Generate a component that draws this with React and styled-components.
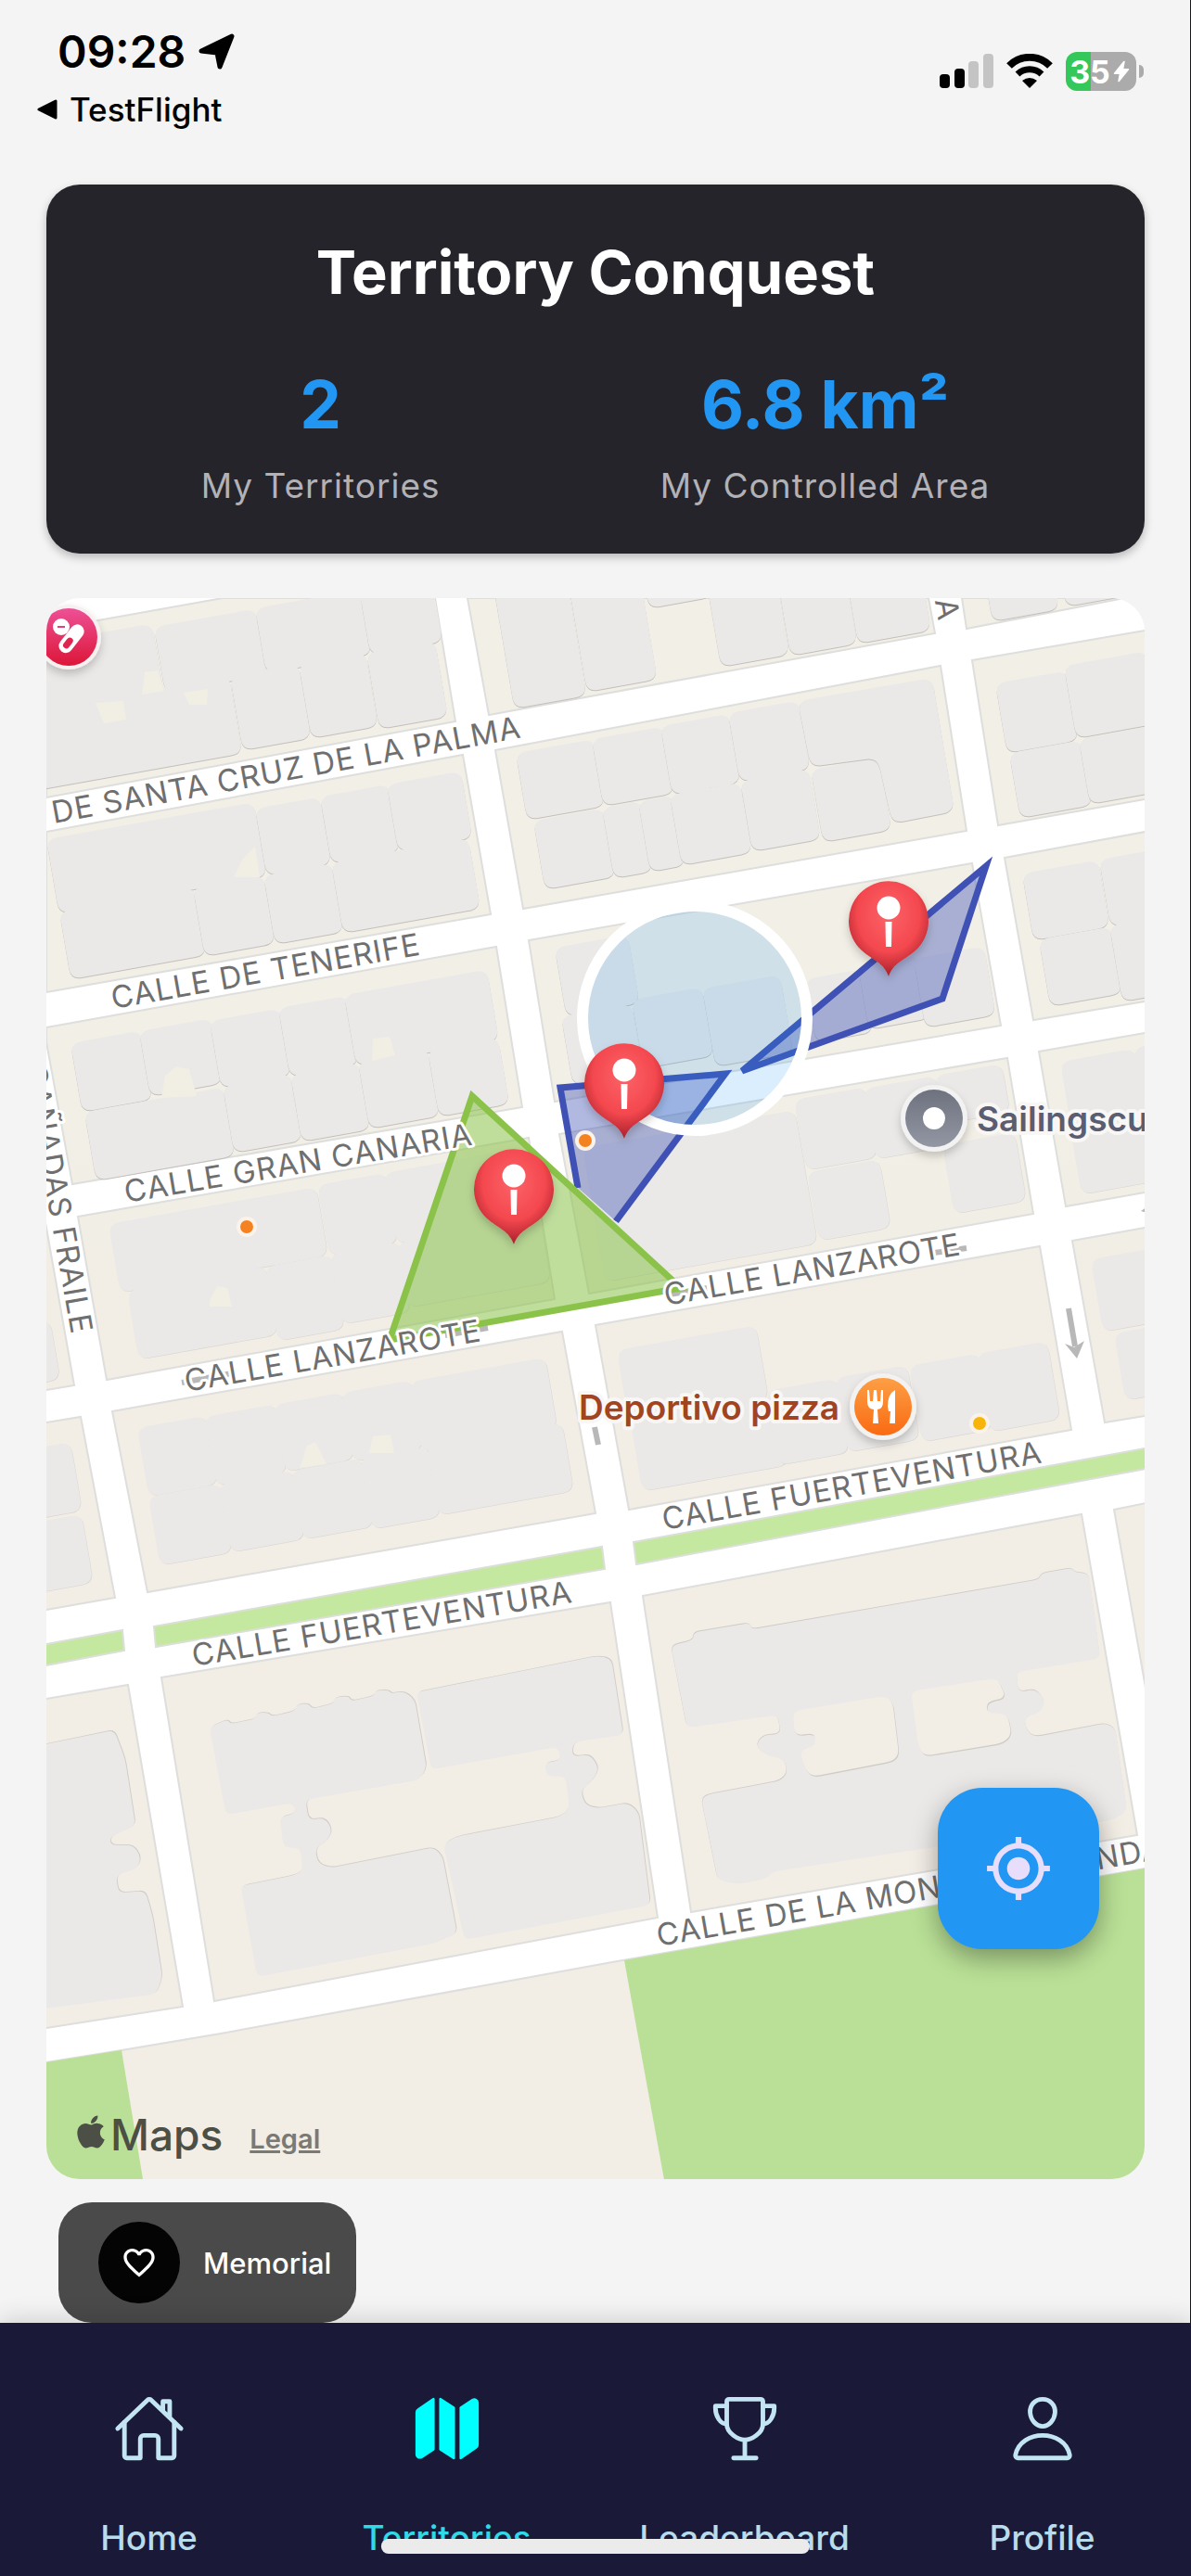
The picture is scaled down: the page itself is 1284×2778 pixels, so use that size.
import { FaApple } from "react-icons/fa";
import {
  IoFlash,
  IoHomeOutline,
  IoMap,
  IoPersonOutline,
  IoTrophyOutline,
} from "react-icons/io5";
import { MdFavoriteBorder, MdMyLocation } from "react-icons/md";
import styled, { createGlobalStyle } from "styled-components";

const GlobalStyle = createGlobalStyle`
  * {
    box-sizing: border-box;
  }

  body {
    margin: 0;
    background-color: #f4f4f4;
    font-family: Inter, "Liberation Sans", sans-serif;
    color: #000;
  }
`;

const Page = styled.div`
  display: flex;
  flex-direction: column;
  min-height: 100vh;
  border-right: 1px solid #15151c;
`;

/* status bar */

const StatusBar = styled.header`
  display: flex;
  justify-content: space-between;
  align-items: flex-start;
  padding: 28px 50px 61px 40px;
`;

const StatusLeft = styled.div`
  display: flex;
  flex-direction: column;
  gap: 14px;
`;

const Clock = styled.div`
  display: flex;
  align-items: center;
  gap: 14px;
  padding-left: 22px;
  font-size: 48px;
  line-height: 56px;
  font-weight: 600;
`;

const BackLink = styled.a`
  display: flex;
  align-items: center;
  gap: 13px;
  font-size: 35px;
  line-height: 40px;
  font-weight: 500;
  color: inherit;
  text-decoration: none;
`;

const StatusRight = styled.div`
  display: flex;
  align-items: center;
  gap: 14px;
  padding-top: 28px;
`;

const Battery = styled.div`
  position: relative;
  display: flex;
  align-items: center;
  justify-content: center;
  width: 76px;
  height: 42px;
  margin-right: 8px;
  border-radius: 12px;
  background: linear-gradient(90deg, #34c759 36%, #ababab 36%);
  color: white;
  font-size: 34px;
  font-weight: 700;

  &::after {
    content: "";
    position: absolute;
    right: -8px;
    width: 5px;
    height: 14px;
    border-radius: 0 5px 5px 0;
    background-color: #ababab;
  }
`;

/* summary card */

const Main = styled.main`
  display: flex;
  flex-direction: column;
  flex: 1;
  padding: 0 49px 0 50px;
`;

const SummaryCard = styled.section`
  padding: 48px;
  margin-bottom: 48px;
  border-radius: 36px;
  background-color: #25242b;
  box-shadow: 0 4px 10px rgba(0, 0, 0, 0.25);
`;

const Title = styled.h1`
  margin: 0 0 48px;
  color: white;
  font-size: 65px;
  line-height: 94px;
  font-weight: 700;
  text-align: center;
`;

const Stats = styled.div`
  display: flex;
  justify-content: space-around;
`;

const Stat = styled.div`
  display: flex;
  flex-direction: column;
  align-items: center;
  gap: 16px;
`;

const StatValue = styled.div`
  color: #2196f3;
  font-size: 71px;
  line-height: 94px;
  font-weight: 700;
`;

const StatLabel = styled.div`
  color: #b2b1b6;
  font-size: 37px;
  line-height: 50px;
  letter-spacing: 1px;
`;

/* map */

const MapFrame = styled.section`
  position: relative;
  overflow: hidden;
  border-radius: 36px;
  background-color: white;
`;

const MapDrawing = styled.svg`
  display: block;
  width: 100%;
`;

const StreetName = styled.text`
  fill: #6f6f6f;
  font-size: 33px;
  letter-spacing: 1px;
  stroke: white;
  stroke-width: 6px;
  stroke-linejoin: round;
  paint-order: stroke;
`;

const PlaceName = styled.text`
  font-size: 37px;
  font-weight: 600;
  stroke: #f8f7f5;
  stroke-width: 8px;
  stroke-linejoin: round;
  paint-order: stroke;
`;

const Attribution = styled.div`
  position: absolute;
  left: 28px;
  bottom: 18px;
  display: flex;
  align-items: flex-end;
  gap: 29px;
`;

const MapsBrand = styled.span`
  display: flex;
  align-items: center;
  gap: 1px;
  color: #4c4f45;
  font-size: 46px;
  line-height: 60px;
  font-weight: 500;

  svg {
    margin-bottom: 6px;
  }
`;

const LegalLink = styled.a`
  color: #7b7974;
  font-size: 29px;
  line-height: 50px;
  font-weight: 600;
  text-decoration-thickness: 3px;
`;

const LocateButton = styled.button`
  position: absolute;
  right: 49px;
  bottom: 248px;
  display: flex;
  align-items: center;
  justify-content: center;
  width: 174px;
  height: 174px;
  padding: 0;
  border: none;
  border-radius: 48px;
  background-color: #2196f3;
  color: #e8defc;
  box-shadow: 0 10px 28px rgba(0, 0, 0, 0.35);
`;

/* memorial button */

const MemorialButton = styled.button`
  display: flex;
  align-items: center;
  align-self: flex-start;
  gap: 25px;
  margin: 25px 0 0 13px;
  padding: 21px 27px 21px 43px;
  border: none;
  border-radius: 36px;
  background-color: #4a4a4a;
  color: white;
  font-family: inherit;
  font-size: 31px;
  font-weight: 500;
`;

const HeartBadge = styled.span`
  display: flex;
  align-items: center;
  justify-content: center;
  width: 88px;
  height: 88px;
  border-radius: 50%;
  background-color: #040404;
`;

/* tab bar */

const TabBar = styled.nav`
  position: relative;
  display: flex;
  padding: 75px 0 17px;
  margin-right: -1px;
  background-color: #1a1a38;
  box-shadow: 0 -4px 24px rgba(0, 0, 0, 0.14);
`;

const Tab = styled.a`
  display: flex;
  flex: 1;
  flex-direction: column;
  align-items: center;
  gap: 55px;
  color: ${(props) => (props.$active ? "#00ffff" : "#c3e4f2")};
  font-size: 37px;
  line-height: 48px;
  font-weight: 500;
  text-decoration: none;
`;

const TabLabel = styled.span`
  color: ${(props) => (props.$active ? "#2fd9e6" : "#b9dcec")};
`;

const HomeIndicator = styled.div`
  position: absolute;
  left: 50%;
  bottom: 24px;
  width: 36%;
  height: 16px;
  border-radius: 8px;
  background-color: #ebebeb;
  transform: translateX(-50%);
`;

const blocks = [
  "50,679 240,645 469,645 491,778 50,860",
  "504,645 1001,645 1008,683 527,771",
  "1037,645 1212,645 1042,678",
  "1048,712 1240,679 1240,861 1076,890",
  "534,809 1014,718 1042,896 564,980",
  "50,897 499,814 529,986 50,1070",
  "50,1108 535,1021 563,1194 78,1277 50,1124",
  "570,1014 1048,931 1079,1106 598,1188",
  "1083,925 1240,896 1240,1079 1114,1100",
  "84,1312 570,1227 598,1401 115,1488",
  "603,1223 1086,1141 1114,1309 635,1395",
  "1120,1134 1240,1113 1240,1285 1149,1301",
  "121,1522 606,1436 642,1632 159,1717",
  "642,1429 1121,1344 1155,1542 678,1628",
  "1156,1338 1240,1323 1240,1526 1191,1534",
  "44,1290 80,1494 44,1500",
  "44,1535 87,1528 124,1723 44,1737",
  "44,1833 138,1817 197,2164 44,2188",
  "174,1809 658,1728 709,2068 231,2158",
  "693,1721 1166,1633 1226,1979 745,2062",
  "1201,1628 1240,1620 1240,1848",
  "44,2225 131,2211 238,2193 660,2116 1240,2014 1240,2356 44,2356",
];

const medians = [
  "44,1774 132,1758 134,1780 44,1797",
  "166,1754 649,1668 652,1692 168,1776",
  "683,1663 1240,1561 1240,1583 686,1687",
];

const parks = [
  "44,2225 131,2211 155,2356 44,2356",
  "673,2114 1240,2014 1240,2356 717,2356",
];

// [x, y, width, depth] of each lot, skewed to the street grid
const northLots = [
  [20, 698, 140, 90],
  [166, 676, 106, 67],
  [275, 656, 110, 66],
  [388, 640, 74, 62],
  [25, 768, 218, 80],
  [248, 729, 70, 76],
  [322, 716, 68, 76],
  [395, 704, 70, 78],
  [530, 620, 74, 140],
  [612, 624, 72, 118],
  [690, 600, 65, 52],
  [757, 600, 70, 115],
  [832, 588, 68, 115],
  [905, 577, 75, 113],
  [1059, 606, 68, 60],
  [1140, 600, 60, 50],
  [1073, 737, 73, 71],
  [1147, 718, 85, 74],
  [1088, 812, 74, 66],
  [1163, 797, 80, 66],
  [556, 812, 80, 68],
  [638, 797, 73, 68],
  [712, 783, 70, 70],
  [785, 769, 72, 70],
  [575, 885, 72, 70],
  [649, 871, 38, 72],
  [688, 864, 34, 72],
  [722, 857, 72, 72],
  [798, 842, 70, 72],
  [874, 830, 70, 74],
  [50, 905, 220, 76],
  [275, 872, 66, 68],
  [345, 859, 70, 68],
  [417, 846, 76, 68],
  [64, 983, 142, 69],
  [208, 957, 72, 70],
  [284, 944, 70, 70],
  [357, 930, 144, 72],
  [76, 1125, 72, 70],
  [150, 1112, 74, 66],
  [226, 1101, 72, 68],
  [300, 1087, 70, 70],
  [371, 1073, 150, 72],
  [91, 1199, 146, 70],
  [240, 1171, 70, 68],
  [313, 1159, 70, 68],
  [386, 1145, 72, 68],
  [461, 1132, 72, 68],
  [598, 1022, 75, 70],
  [605, 1096, 72, 70],
  [681, 1078, 72, 70],
  [757, 1066, 80, 80],
  [868, 1056, 58, 64],
  [925, 1042, 62, 64],
  [985, 1034, 72, 70],
  [1102, 942, 78, 68],
  [1185, 927, 70, 68],
  [1120, 1013, 74, 68],
  [1196, 998, 60, 78],
];

const middleLots = [
  [628, 1238, 225, 140],
  [856, 1186, 73, 72],
  [931, 1174, 74, 72],
  [1008, 1160, 68, 48],
  [1016, 1235, 74, 70],
  [870, 1264, 74, 70],
  [117, 1320, 220, 70],
  [342, 1278, 70, 72],
  [414, 1265, 148, 72],
  [137, 1392, 146, 70],
  [286, 1366, 68, 76],
  [356, 1352, 70, 72],
  [428, 1340, 150, 66],
  [1143, 1145, 76, 70],
  [1222, 1130, 60, 70],
  [1154, 1218, 80, 66],
  [-4, 1434, 54, 60],
  [10, 1567, 62, 70],
  [20, 1645, 64, 70],
  [148, 1540, 70, 70],
  [220, 1528, 73, 70],
  [295, 1515, 71, 68],
  [368, 1502, 72, 70],
  [442, 1490, 142, 72],
  [160, 1614, 74, 70],
  [236, 1600, 76, 70],
  [314, 1586, 72, 70],
  [388, 1573, 70, 72],
  [460, 1560, 142, 70],
  [665, 1456, 146, 76],
  [680, 1534, 154, 70],
  [826, 1500, 72, 76],
  [900, 1486, 74, 76],
  [980, 1473, 72, 78],
  [1053, 1460, 72, 80],
  [1176, 1358, 70, 74],
  [1201, 1438, 60, 68],
];

const courtyards = [
  "103,758 133,756 136,776 112,780",
  "156,725 170,723 177,745 153,749",
  "198,747 224,743 223,760 204,760",
  "262,926 275,913 280,946 252,946",
  "178,1160 190,1150 204,1153 212,1182 174,1184",
  "402,1120 420,1118 426,1138 401,1144",
  "226,1403 234,1387 245,1389 250,1409 226,1409",
  "331,1559 340,1555 352,1579 323,1583",
  "402,1549 421,1547 425,1567 398,1567",
];

// large buildings at the south end, each group on its own survey grid
const southWest = [
  [[0, 350], [210, 308], [240, 385], [268, 560], [200, 590], [200, 612], [262, 612], [283, 642], [275, 672], [215, 692], [222, 738], [295, 733], [315, 800], [341, 960], [325, 1005], [0, 1046]],
  [[470, 300], [520, 280], [527, 292], [595, 278], [600, 262], [632, 262], [638, 272], [702, 258], [708, 240], [742, 238], [748, 252], [808, 238], [812, 222], [850, 218], [855, 232], [918, 218], [925, 203], [960, 203], [965, 212], [1000, 205], [1030, 228], [1062, 410], [1040, 440], [732, 492], [740, 545], [785, 540], [805, 572], [790, 602], [758, 620], [766, 660], [800, 672], [1080, 618], [1105, 640], [1145, 845], [1080, 872], [600, 960], [555, 720], [700, 692], [724, 680], [718, 620], [672, 618], [662, 538], [705, 528], [698, 500], [515, 532]],
  [[1034, 208], [1530, 112], [1566, 120], [1598, 320], [1462, 340], [1458, 378], [1508, 373], [1532, 408], [1515, 442], [1482, 466], [1494, 506], [1530, 515], [1610, 500], [1640, 525], [1672, 770], [1165, 862], [1108, 610], [1140, 590], [1425, 537], [1452, 515], [1440, 430], [1390, 430], [1383, 395], [1428, 388], [1420, 352], [1075, 412]],
];

const southEast = [
  [[203, 85], [262, 70], [262, 50], [410, 25], [415, 42], [1170, -90], [1175, -106], [1255, -120], [1265, -108], [1300, -106], [1330, 118], [1110, 155], [1115, 208], [1162, 200], [1187, 235], [1170, 262], [1130, 275], [1138, 312], [1160, 326], [1345, 290], [1370, 305], [1400, 522], [1362, 546], [470, 682], [455, 700], [380, 715], [326, 705], [283, 490], [300, 478], [490, 442], [510, 420], [500, 385], [450, 374], [425, 348], [445, 322], [492, 318], [483, 268], [245, 302]],
];

const southEastCourts = [
  [[523, 258], [765, 218], [785, 235], [801, 372], [785, 390], [575, 431], [555, 412], [540, 362], [582, 350], [582, 316], [528, 322]],
  [[833, 205], [1060, 170], [1082, 222], [1032, 234], [1032, 262], [1086, 266], [1097, 320], [1075, 342], [870, 376], [853, 355]],
];

const streetNames = [
  { text: "DE SANTA CRUZ DE LA PALMA", x: 58, y: 888, angle: -10.4 },
  { text: "CALLE DE TENERIFE", x: 122, y: 1088, angle: -10 },
  { text: "CALLE GRAN CANARIA", x: 136, y: 1297, angle: -9.5 },
  { text: "CALLE LANZAROTE", x: 201, y: 1501, angle: -9.8 },
  { text: "CALLE LANZAROTE", x: 718, y: 1408, angle: -9.8 },
  { text: "CALLE FUERTEVENTURA", x: 209, y: 1797, angle: -9.6 },
  { text: "CALLE FUERTEVENTURA", x: 716, y: 1650, angle: -10.1 },
  { text: "CALLE DE LA MONTAÑA BLANDA", x: 710, y: 2099, angle: -9.9 },
  { text: "CAÑADAS FRAILE", x: 77, y: 1440, angle: 80, anchor: "end" },
  { text: "A", x: 1012, y: 671, angle: 80, anchor: "end" },
];

const pins = [
  { x: 958, y: 993 },
  { x: 673, y: 1168 },
  { x: 554, y: 1282 },
];

const dots = [
  { x: 266, y: 1323, color: "#f58220" },
  { x: 631, y: 1230, color: "#f58220" },
  { x: 1056, y: 1535, color: "#f7b50c" },
];

const tabs = [
  { label: "Home", Icon: IoHomeOutline },
  { label: "Territories", Icon: IoMap, active: true },
  { label: "Leaderboard", Icon: IoTrophyOutline },
  { label: "Profile", Icon: IoPersonOutline },
];

// neighbouring lots overlap a little, so only their seams show
const overlap = 4;

const lotCorners = ([x, y, width, depth]) => {
  const w = width + overlap;
  const d = depth + overlap;
  return [
    [x, y],
    [x + w, y - w * 0.178],
    [x + w + d * 0.17, y - w * 0.178 + d],
    [x + d * 0.17, y + d],
  ];
};

// closed path through the points with every corner rounded off
const roundedPath = (points, radius) => {
  const toward = ([ax, ay], [bx, by]) => {
    const length = Math.hypot(bx - ax, by - ay);
    const t = Math.min(radius, length / 2) / length;
    return `${ax + (bx - ax) * t} ${ay + (by - ay) * t}`;
  };
  const corners = points.map((point, i) => {
    const before = points[(i + points.length - 1) % points.length];
    const after = points[(i + 1) % points.length];
    return `${toward(point, before)} Q${point.join(" ")} ${toward(point, after)}`;
  });
  return `M${corners.join(" L")} Z`;
};

function Building({ points, radius = 12, dx = 0, dy = 1, shade = "#c2bfba" }) {
  const d = roundedPath(points, radius);
  return (
    <>
      <path d={d} fill={shade} transform={`translate(${dx} ${dy})`} />
      <path d={d} fill="#eae9e8" />
    </>
  );
}

function Pin({ x, y }) {
  return (
    <g transform={`translate(${x} ${y})`}>
      <path
        d="M0 60 C-5 45 -18 42 -29 32 A43 43 0 1 1 29 32 C18 42 5 45 0 60 Z"
        fill="url(#pinFill)"
        filter="url(#softShadow)"
      />
      <circle cy="-14" r="12.5" fill="white" />
      <path d="M-3.500 1 H3.500 L3 28 H-3 Z" fill="white" />
    </g>
  );
}

function MapView() {
  return (
    <MapDrawing viewBox="50 645 1184 1705" role="img" aria-label="Territory map">
      <defs>
        <linearGradient id="landFill" x1="0" y1="645" x2="0" y2="1500" gradientUnits="userSpaceOnUse">
          <stop offset="0.600" stopColor="#f1efe6" />
          <stop offset="1" stopColor="#f2ede5" />
        </linearGradient>
        <radialGradient id="pinFill" cx="0.5" cy="0.35" r="0.65">
          <stop offset="0" stopColor="#fb6367" />
          <stop offset="0.600" stopColor="#f4484f" />
          <stop offset="1" stopColor="#a81f2a" />
        </radialGradient>
        <linearGradient id="greyFill" x2="0" y2="1">
          <stop offset="0" stopColor="#6d727e" />
          <stop offset="1" stopColor="#9297a3" />
        </linearGradient>
        <linearGradient id="orangeFill" x2="0" y2="1">
          <stop offset="0" stopColor="#fd9f45" />
          <stop offset="1" stopColor="#f96a12" />
        </linearGradient>
        <linearGradient id="pinkFill" x2="0" y2="1">
          <stop offset="0" stopColor="#ee5096" />
          <stop offset="1" stopColor="#dc1638" />
        </linearGradient>
        <filter id="softShadow" x="-50%" y="-50%" width="200%" height="200%">
          <feDropShadow dx="0" dy="5" stdDeviation="5" floodOpacity="0.2" />
        </filter>
      </defs>

      <g fill="url(#landFill)" stroke="#dededc" strokeWidth="2">
        {blocks.map((points) => (
          <polygon key={points} points={points} />
        ))}
      </g>
      <g fill="#b9e096">
        {parks.map((points) => (
          <polygon key={points} points={points} />
        ))}
      </g>
      <g fill="#c4e8a0" stroke="#dcdfd8" strokeWidth="2">
        {medians.map((points) => (
          <polygon key={points} points={points} />
        ))}
      </g>

      {northLots.map((lot) => (
        <Building key={lot.join()} points={lotCorners(lot)} />
      ))}
      <Building
        points={[[860, 756], [1005, 731], [1029, 875], [962, 888], [946, 817], [874, 827]]}
      />
      {middleLots.map((lot) => (
        <Building key={lot.join()} points={lotCorners(lot)} dx={0.5} dy={0.5} shade="#d8d5d1" />
      ))}
      <g fill="#f1eee4">
        {courtyards.map((points) => (
          <polygon key={points} points={points} />
        ))}
      </g>
      <g transform="translate(40 1740) scale(0.3954 0.4082)">
        {southWest.map((points, i) => (
          <Building key={i} points={points} radius={18} dx={2} dy={-2} shade="#cfccc7" />
        ))}
      </g>
      <g transform="translate(640 1740) scale(0.4107 0.4082)">
        {southEast.map((points, i) => (
          <Building key={i} points={points} radius={18} dx={-1} dy={-2} shade="#cfccc7" />
        ))}
        {southEastCourts.map((points, i) => {
          const d = roundedPath(points, 20);
          return (
            <g key={i}>
              <path d={d} fill="#cfccc7" transform="translate(2 3)" />
              <path d={d} fill="#f2ede5" />
            </g>
          );
        })}
      </g>

      {/* one-way arrows */}
      <g stroke="#b8b8b8" strokeWidth="6" fill="#b8b8b8">
        <path d="M1152 1411 L1159 1452" />
        <path d="M1148 1449 L1158 1453 L1169 1446 L1161 1465 Z" stroke="none" />
        <path d="M641 1539 L645 1558" />
        <path d="M196 1491 L250 1481 M480 1440 L526 1432 M716 1397 L762 1389 M1000 1352 L1042 1346" />
        <path d="M1230 1306 L1236 1302 L1236 1308 Z" stroke="none" />
      </g>

      {/* claimed territories */}
      <g strokeWidth="7" strokeLinejoin="miter">
        <polygon
          points="1063,934 1016,1077 800,1155"
          fill="rgba(63, 81, 181, 0.4)"
          stroke="#3f51b5"
        />
        <polygon points="604,1173 782,1158 664,1317 623,1281" fill="rgba(63, 81, 181, 0.4)" />
        <polyline points="623,1281 604,1173 782,1158 664,1317" fill="none" stroke="#3f51b5" />
        <polygon
          points="509,1182 420,1445 734,1389"
          fill="rgba(139, 195, 74, 0.55)"
          stroke="#8bc34a"
        />
      </g>
      <circle cx="749" cy="1098" r="121" fill="rgba(33, 150, 243, 0.160)" stroke="white" strokeWidth="12" />

      {streetNames.map(({ text, x, y, angle, anchor }) => (
        <StreetName
          key={`${text}${y}`}
          textAnchor={anchor}
          transform={`translate(${x} ${y}) rotate(${angle})`}
        >
          {text}
        </StreetName>
      ))}

      {dots.map(({ x, y, color }) => (
        <circle key={y} cx={x} cy={y} r="9" fill={color} stroke="#fbf3ea" strokeWidth="4" />
      ))}

      {/* pharmacy */}
      <g transform="translate(74 687)">
        <circle r="35" fill="#f6f0f1" filter="url(#softShadow)" />
        <circle r="31" fill="url(#pinkFill)" />
        <circle cx="-8" cy="-11" r="9" fill="white" />
        <path d="M-12 -11 H-4" stroke="#e63f7c" strokeWidth="2" />
        <g transform="rotate(-52)">
          <rect x="-17" y="-4" width="35" height="15" rx="7.500" fill="white" />
          <rect x="-12" y="0" width="13" height="7" rx="3.500" fill="#de2650" />
        </g>
      </g>

      {/* sailing school */}
      <g transform="translate(1007 1206)">
        <circle r="36" fill="#f3f2f3" filter="url(#softShadow)" />
        <circle r="31" fill="url(#greyFill)" />
        <circle r="12" fill="white" />
      </g>
      <PlaceName x="1053" y="1220" fill="#5a5e70">
        Sailingscu
      </PlaceName>

      {/* restaurant */}
      <g transform="translate(952 1517)">
        <circle r="36" fill="#f3f2f0" filter="url(#softShadow)" />
        <circle r="31" fill="url(#orangeFill)" />
        <path
          d="M-17 -18 V-5 Q-17 2 -10 3 L-11 18 H-5 L-6 3 Q0 2 0 -5 V-18 H-2 L-3 -6 H-6 L-7 -18 H-10 L-11 -6 H-14 L-15 -18 Z"
          fill="white"
        />
        <path d="M13 -18 Q5 -14 5 0 L6 5 H8 L7 18 H13 Z" fill="white" />
      </g>
      <PlaceName x="624" y="1531" fill="#a2441f">
        Deportivo pizza
      </PlaceName>

      {pins.map((pin) => (
        <Pin key={pin.x} {...pin} />
      ))}
    </MapDrawing>
  );
}

function LocationArrow() {
  return (
    <svg width="40" height="40" viewBox="0 0 40 40" aria-hidden="true">
      <path
        d="M36 3 L23 36 L20 21 L3 19 Z"
        stroke="#000"
        strokeWidth="5"
        strokeLinejoin="round"
      />
    </svg>
  );
}

function Signal() {
  return (
    <svg width="58" height="38" viewBox="0 0 58 38" aria-label="Signal">
      <rect y="22" width="11" height="15" rx="4" />
      <rect x="16" y="16" width="11" height="21" rx="4" />
      <rect x="31" y="8" width="11" height="29" rx="4" fill="#c4c4c4" />
      <rect x="47" y="0" width="11" height="37" rx="4" fill="#c4c4c4" />
    </svg>
  );
}

function Wifi() {
  return (
    <svg width="50" height="38" viewBox="0 0 50 38" fill="none" stroke="#000" aria-label="Wi-Fi">
      <path d="M3 13 A31 31 0 0 1 47 13" strokeWidth="8" />
      <path d="M12 22 A19 19 0 0 1 38 22" strokeWidth="7" />
      <path d="M17 29 Q25 23 33 29 L25 37 Z" fill="#000" stroke="none" />
    </svg>
  );
}

export default function App() {
  return (
    <>
      <GlobalStyle />
      <Page>
        <StatusBar>
          <StatusLeft>
            <Clock>
              09:28
              <LocationArrow />
            </Clock>
            <BackLink href="#testflight">
              <svg width="22" height="22" viewBox="0 0 22 22" aria-hidden="true">
                <path d="M2 11 L20 2 V20 Z" stroke="#000" strokeWidth="3" strokeLinejoin="round" />
              </svg>
              TestFlight
            </BackLink>
          </StatusLeft>
          <StatusRight>
            <Signal />
            <Wifi />
            <Battery>
              35
              <IoFlash size={24} />
            </Battery>
          </StatusRight>
        </StatusBar>

        <Main>
          <SummaryCard>
            <Title>Territory Conquest</Title>
            <Stats>
              <Stat>
                <StatValue>2</StatValue>
                <StatLabel>My Territories</StatLabel>
              </Stat>
              <Stat>
                <StatValue>6.8 km²</StatValue>
                <StatLabel>My Controlled Area</StatLabel>
              </Stat>
            </Stats>
          </SummaryCard>

          <MapFrame>
            <MapView />
            <Attribution>
              <MapsBrand>
                <FaApple size={40} />
                Maps
              </MapsBrand>
              <LegalLink href="#legal">Legal</LegalLink>
            </Attribution>
            <LocateButton aria-label="Show my location">
              <MdMyLocation size={74} />
            </LocateButton>
          </MapFrame>

          <MemorialButton>
            <HeartBadge>
              <MdFavoriteBorder size={40} />
            </HeartBadge>
            Memorial
          </MemorialButton>
        </Main>

        <TabBar>
          {tabs.map(({ label, Icon, active }) => (
            <Tab key={label} href={`#${label.toLowerCase()}`} $active={active}>
              <Icon size={78} />
              <TabLabel $active={active}>{label}</TabLabel>
            </Tab>
          ))}
          <HomeIndicator />
        </TabBar>
      </Page>
    </>
  );
}
